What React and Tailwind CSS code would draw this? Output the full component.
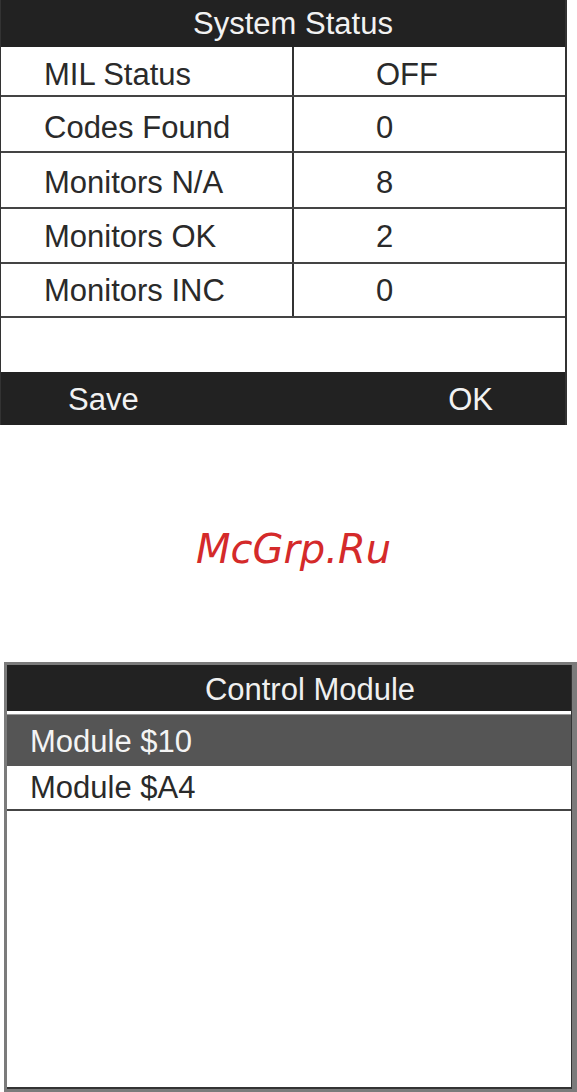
import React from "react";

const statusRows = [
  { label: "MIL Status", value: "OFF", h: "h-[48px]", pt: "pt-[6px]" },
  { label: "Codes Found", value: "0", h: "h-[56px]", pt: "pt-[6px]" },
  { label: "Monitors N/A", value: "8", h: "h-[56px]", pt: "pt-[4px]" },
  { label: "Monitors OK", value: "2", h: "h-[55px]", pt: "pt-[1px]" },
  { label: "Monitors INC", value: "0", h: "h-[54px]", pt: "pt-0" },
];

const SystemStatus = () => (
  <div className="w-[567px] flex flex-col border-l border-r-2 border-[#333]">
    {/* header */}
    <div className="h-[47px] bg-[#222] flex items-center justify-center pl-[20px] text-[31px] text-[#f2f2f2]">
      System Status
    </div>

    {/* rows */}
    {statusRows.map((row, i) => (
      <div
        key={row.label}
        className={
          "flex text-[31px] text-[#2a2a2a] " +
          row.h +
          (i > 0 ? " border-t-2 border-[#444]" : "")
        }
      >
        <div className={"w-[293px] flex items-center pl-[43px] border-r-2 border-[#333] " + row.pt}>
          {row.label}
        </div>
        <div className={"flex-1 flex items-center pl-[82px] " + row.pt}>{row.value}</div>
      </div>
    ))}

    <div className="h-[56px] border-t-2 border-[#444] bg-white" />

    {/* footer */}
    <div className="h-[53px] bg-[#222] flex items-center justify-between pl-[67px] pr-[72px] pt-[2px] text-[31px] text-[#f2f2f2]">
      <span>Save</span>
      <span>OK</span>
    </div>
  </div>
);

const ControlModule = () => (
  <div className="ml-[4px] w-[573px] h-[430px] bg-[#7b7b7b] pt-[3px] pl-[3px] pr-[5px] pb-[3px]">
    <div className="h-full flex flex-col bg-white border-b-2 border-r border-[#333]">
      <div className="h-[46px] bg-[#222] flex items-center justify-center pl-[42px] pt-[2px] text-[31px] text-[#f0f0f0]">
        Control Module
      </div>
      <div className="h-[4px] bg-white border-b border-[#999]" />
      <div className="h-[51px] bg-[#555] flex items-center pl-[23px] pt-[2px] text-[31px] text-[#f4f4f4]">
        Module $10
      </div>
      <div className="h-[45px] flex items-center pl-[23px] text-[31px] text-[#2a2a2a] border-b-2 border-[#444]">
        Module $A4
      </div>
      <div className="flex-1" />
    </div>
  </div>
);

export default function App() {
  return (
    <div className="w-[577px] h-[1092px] bg-white overflow-hidden font-['Liberation_Sans',Arial,sans-serif] leading-none">
      <SystemStatus />

      <div className="h-[237px] pt-[100px] flex justify-center pl-[10px]">
        <span className="font-['DejaVu_Sans',sans-serif] italic text-[40px] leading-[48px] text-[#d42a2a]">
          McGrp.Ru
        </span>
      </div>

      <ControlModule />
    </div>
  );
}
